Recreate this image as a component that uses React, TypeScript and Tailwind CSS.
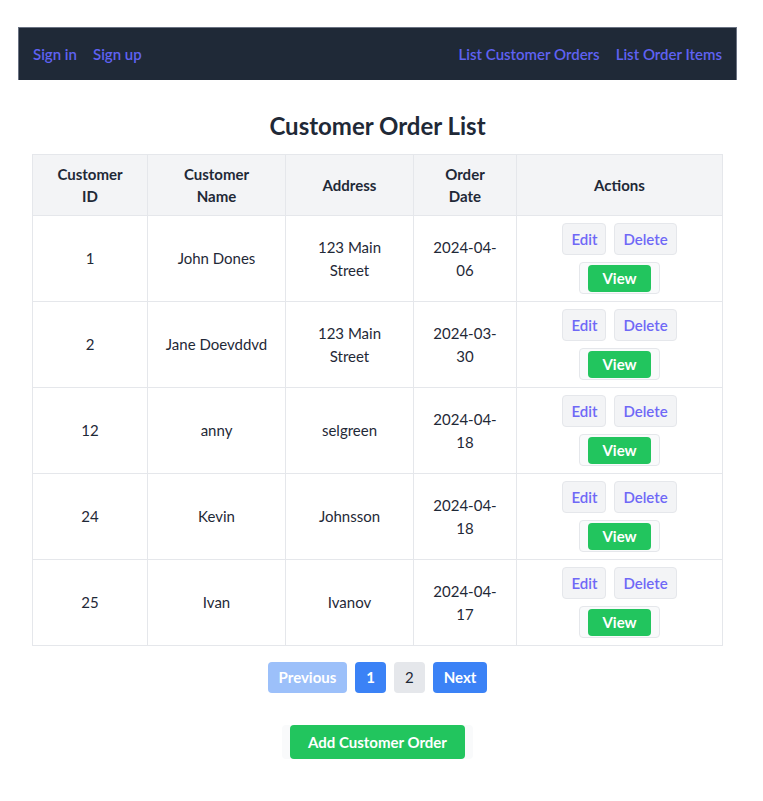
const orders = [
  { id: 1, name: "John Dones", address: "123 Main Street", date: "2024-04-06" },
  { id: 2, name: "Jane Doevddvd", address: "123 Main Street", date: "2024-03-30" },
  { id: 12, name: "anny", address: "selgreen", date: "2024-04-18" },
  { id: 24, name: "Kevin", address: "Johnsson", date: "2024-04-18" },
  { id: 25, name: "Ivan", address: "Ivanov", date: "2024-04-17" },
];

function Navbar() {
  return (
    <nav className="flex h-[53px] items-center justify-between border-x border-t border-gray-500 bg-[#1f2937] px-[14px] font-semibold text-[#5f62f2]">
      <div className="flex gap-4">
        <a href="#">Sign in</a>
        <a href="#">Sign up</a>
      </div>
      <div className="flex gap-4">
        <a href="#">List Customer Orders</a>
        <a href="#">List Order Items</a>
      </div>
    </nav>
  );
}

export default function App() {
  return (
    <div
      className="bg-white pb-10 pl-[18px] pr-[26px] pt-[27px] text-[15px] text-[#1f2937]"
      style={{ fontFamily: '"Lato", "Open Sans", sans-serif' }}
    >
      <Navbar />

      <div className="px-[14px]">
        <h1 className="mt-[30px] mb-[12px] text-center text-2xl font-bold">Customer Order List</h1>

        <table className="w-full table-fixed border-collapse border border-[#e5e7eb] text-center">
          <thead className="bg-[#f3f4f6]">
            <tr className="leading-[22px]">
              <th className="w-[115px] border border-[#e5e7eb] px-4 py-2">Customer ID</th>
              <th className="w-[138px] border border-[#e5e7eb] px-4 py-2">Customer Name</th>
              <th className="w-[128px] border border-[#e5e7eb] px-4 py-2">Address</th>
              <th className="w-[103px] border border-[#e5e7eb] px-4 py-2">Order Date</th>
              <th className="border border-[#e5e7eb] px-4 py-2">Actions</th>
            </tr>
          </thead>
          <tbody>
            {orders.map((o) => (
              <tr key={o.id} className="leading-[23px]">
                <td className="border border-[#e5e7eb] px-4 py-[7px]">{o.id}</td>
                <td className="border border-[#e5e7eb] px-4 py-[7px]">{o.name}</td>
                <td className="border border-[#e5e7eb] px-4 py-[7px]">{o.address}</td>
                <td className="border border-[#e5e7eb] px-4 py-[7px]">{o.date}</td>
                <td className="border border-[#e5e7eb] px-4 py-[7px]">
                  <div className="flex flex-col items-center gap-[7px]">
                    <div className="flex gap-2">
                      <button className="h-8 rounded border border-[#e5e7eb] bg-[#f3f4f6] px-2 font-semibold text-[#6f68f6]">
                        Edit
                      </button>
                      <button className="h-8 rounded border border-[#e5e7eb] bg-[#f3f4f6] px-2 font-semibold text-[#6f68f6]">
                        Delete
                      </button>
                    </div>
                    <div className="flex h-8 items-center rounded border border-[#e5e7eb] bg-[#f9fafb] px-2">
                      <span className="flex h-[27px] items-center rounded bg-[#22c55e] px-[14px] font-bold text-white">
                        View
                      </span>
                    </div>
                  </div>
                </td>
              </tr>
            ))}
          </tbody>
        </table>

        <div className="mt-4 flex justify-center gap-2 font-bold">
          <button className="h-[31px] rounded bg-[#3b82f6] px-[11px] text-white opacity-50">Previous</button>
          <button className="h-[31px] rounded bg-[#3b82f6] px-[11px] text-white">1</button>
          <button className="h-[31px] rounded bg-[#e5e7eb] px-[11px] font-normal text-[#1f2937]">2</button>
          <button className="h-[31px] rounded bg-[#3b82f6] px-[11px] text-white">Next</button>
        </div>

        <div className="mt-8 flex justify-center">
          <div className="rounded bg-[#f9fafb] px-2">
            <button className="h-[34px] rounded bg-[#22c55e] px-[18px] font-bold text-white">Add Customer Order</button>
          </div>
        </div>
      </div>
    </div>
  );
}
